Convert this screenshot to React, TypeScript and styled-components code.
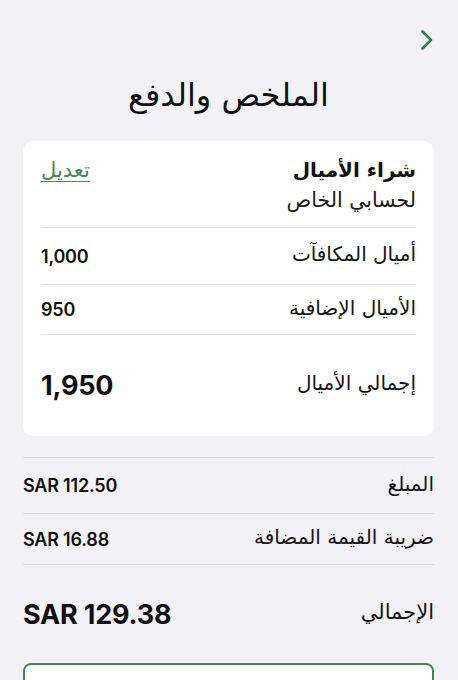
import React from "react";
import styled, { createGlobalStyle } from "styled-components";

const Global = createGlobalStyle`
  html, body {
    margin: 0;
    padding: 0;
    background: #f1f1f6;
    overflow: hidden;
  }
  body {
    font-family: "Inter", "DejaVu Sans", "Noto Sans", sans-serif;
    color: #111;
    -webkit-font-smoothing: antialiased;
  }
`;

const Page = styled.div`
  width: 458px;
  height: 680px;
  overflow: hidden;
  box-sizing: border-box;
  padding: 0 24px 0 23px;
  direction: rtl;
  display: flex;
  flex-direction: column;
  & > * {
    flex-shrink: 0;
  }
`;

const TopBar = styled.div`
  height: 70px;
  display: flex;
  align-items: flex-start;
  padding-top: 28px;
  box-sizing: border-box;
  margin-right: -5px;
`;

const BackButton = styled.button`
  border: none;
  background: none;
  padding: 0;
  width: 24px;
  height: 24px;
  display: flex;
  align-items: center;
  justify-content: center;
  color: #2f7f45;
  cursor: pointer;
`;

const Title = styled.h1`
  margin: 0;
  text-align: center;
  font-family: "DejaVu Sans", sans-serif;
  font-weight: 400;
  font-size: 32px;
  line-height: 50px;
  height: 71px;
`;

const Card = styled.section`
  background: #fff;
  border-radius: 10px;
  padding: 0 18px;
  display: flex;
  flex-direction: column;
  height: 295px;
  box-sizing: border-box;
`;

const CardHeader = styled.div`
  display: flex;
  justify-content: space-between;
  align-items: flex-start;
  padding-top: 13px;
  height: 87px;
  box-sizing: border-box;
  border-bottom: 1px solid #e4e4e8;
`;

const HeaderText = styled.div`
  display: flex;
  flex-direction: column;
`;

const HeaderTitle = styled.div`
  font-family: "DejaVu Sans", sans-serif;
  font-weight: 700;
  font-size: 20px;
  line-height: 32px;
`;

const HeaderSub = styled.div`
  font-family: "DejaVu Sans", sans-serif;
  font-size: 20.5px;
  line-height: 28px;
  color: #1a1a1a;
`;

const EditLink = styled.a`
  font-family: "DejaVu Sans", sans-serif;
  font-size: 21px;
  line-height: 32px;
  color: #3f8d50;
  text-decoration: underline;
  text-underline-offset: 4px;
  text-decoration-thickness: 1px;
  cursor: pointer;
`;

const Row = styled.div<{ $h: number; $line?: boolean; $lineColor?: string }>`
  display: flex;
  justify-content: space-between;
  align-items: center;
  height: ${(p) => p.$h}px;
  box-sizing: border-box;
  border-bottom: ${(p) => (p.$line ? `1px solid ${p.$lineColor || "#e4e4e8"}` : "none")};
`;

const Label = styled.span<{ $size?: number }>`
  font-family: "DejaVu Sans", sans-serif;
  font-size: ${(p) => p.$size || 20}px;
  color: #141414;
  padding-bottom: 4px;
`;

const Value = styled.span<{ $size?: number; $weight?: number }>`
  font-family: "Inter", sans-serif;
  font-size: ${(p) => p.$size || 18}px;
  font-weight: ${(p) => p.$weight || 600};
  letter-spacing: -0.2px;
  color: #111;
  direction: ltr;
`;

const Summary = styled.div`
  margin-top: 21px;
  border-top: 1px solid #dcdce1;
  display: flex;
  flex-direction: column;
`;

const OutlineButton = styled.button`
  height: 52px;
  border: 2px solid #3d8a52;
  border-radius: 8px;
  background: #fff;
`;

export default function App() {
  return (
    <>
      <Global />
      <Page dir="rtl">
        <TopBar>
          <BackButton aria-label="رجوع">
            <svg width="16" height="22" viewBox="0 0 16 22" fill="none">
              <path
                d="M3.5 2.5 L12 11 L3.5 19.5"
                stroke="currentColor"
                strokeWidth="2.6"
                strokeLinecap="round"
                strokeLinejoin="round"
              />
            </svg>
          </BackButton>
        </TopBar>
        <Title>الملخص والدفع</Title>
        <Card>
          <CardHeader>
            <HeaderText>
              <HeaderTitle>شراء الأميال</HeaderTitle>
              <HeaderSub>لحسابي الخاص</HeaderSub>
            </HeaderText>
            <EditLink>تعديل</EditLink>
          </CardHeader>
          <Row $h={57} $line>
            <Label>أميال المكافآت</Label>
            <Value>1,000</Value>
          </Row>
          <Row $h={50} $line>
            <Label>الأميال الإضافية</Label>
            <Value>950</Value>
          </Row>
          <Row $h={100}>
            <Label $size={20}>إجمالي الأميال</Label>
            <Value $size={27} $weight={700}>1,950</Value>
          </Row>
        </Card>
        <Summary>
          <Row $h={56} $line $lineColor="#dcdce1">
            <Label>المبلغ</Label>
            <Value>SAR 112.50</Value>
          </Row>
          <Row $h={51} $line $lineColor="#dcdce1">
            <Label>ضريبة القيمة المضافة</Label>
            <Value>SAR 16.88</Value>
          </Row>
          <Row $h={98}>
            <Label $size={21}>الإجمالي</Label>
            <Value $size={27} $weight={700}>SAR 129.38</Value>
          </Row>
        </Summary>
        <OutlineButton aria-label="متابعة" />
      </Page>
    </>
  );
}
